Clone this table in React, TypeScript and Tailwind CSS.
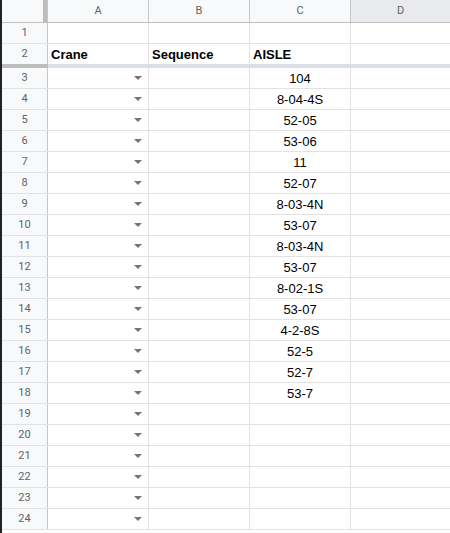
import React from "react";

const data: string[] = [
  "104", "8-04-4S", "52-05", "53-06", "11", "52-07", "8-03-4N", "53-07",
  "8-03-4N", "53-07", "8-02-1S", "53-07", "4-2-8S", "52-5", "52-7", "53-7",
];

function Arrow() {
  return (
    <svg width="8" height="4" viewBox="0 0 8 4" className="block">
      <path d="M0 0 L8 0 L4 4 Z" fill="#757575" />
    </svg>
  );
}

function RowHeader({ n }: { n: number }) {
  return (
    <div className="w-[46px] shrink-0 h-full bg-[#f8f9fa] border-r border-[#c7c7c7] flex items-center justify-center text-[11px] font-normal text-[#5f6368] font-['Roboto',sans-serif]">
      {n}
    </div>
  );
}

export default function App() {
  const rows = Array.from({ length: 22 }, (_, i) => i + 3);
  return (
    <div className="w-[450px] h-[533px] overflow-hidden bg-white flex font-['Liberation_Sans',Arial,sans-serif]">
      <div className="w-[2px] shrink-0 bg-[#202124]" />
      <div className="flex-1 flex flex-col min-w-0">
        {/* column headers */}
        <div className="h-[23px] flex shrink-0 border-b border-[#c0c0c0] font-['Roboto',sans-serif] text-[11px] text-[#5f6368]">
          <div className="w-[46px] shrink-0 flex border-r border-[#c7c7c7]">
            <div className="w-[41px] bg-[#f8f9fa]" />
            <div className="w-[4px] bg-[#bdbdbd]" />
          </div>
          <div className="w-[101px] shrink-0 bg-[#f8f9fa] border-r border-[#c7c7c7] flex items-center justify-center">A</div>
          <div className="w-[101px] shrink-0 bg-[#f8f9fa] border-r border-[#c7c7c7] flex items-center justify-center">B</div>
          <div className="w-[101px] shrink-0 bg-[#f8f9fa] border-r border-[#c7c7c7] flex items-center justify-center">C</div>
          <div className="flex-1 bg-[#e8eaed] flex items-center justify-center">D</div>
        </div>
        {/* row 1 */}
        <div className="h-[21px] flex shrink-0 border-b border-[#e2e2e2]">
          <RowHeader n={1} />
          <div className="w-[101px] shrink-0 border-r border-[#e2e2e2]" />
          <div className="w-[101px] shrink-0 border-r border-[#e2e2e2]" />
          <div className="w-[101px] shrink-0 border-r border-[#e2e2e2]" />
          <div className="flex-1" />
        </div>
        {/* row 2 */}
        <div className="h-[20px] flex shrink-0 text-[13px] text-black">
          <RowHeader n={2} />
          <div className="w-[101px] shrink-0 border-r border-[#e2e2e2] flex items-center pl-[3px] pt-[1px] font-bold">Crane</div>
          <div className="w-[101px] shrink-0 border-r border-[#e2e2e2] flex items-center pl-[3px] pt-[1px] font-bold">Sequence</div>
          <div className="w-[101px] shrink-0 border-r border-[#e2e2e2] flex items-center pl-[3px] pt-[1px] font-bold">AISLE</div>
          <div className="flex-1" />
        </div>
        {/* frozen divider */}
        <div className="h-[4px] flex shrink-0">
          <div className="w-[46px] shrink-0 bg-[#bdbdbd]" />
          <div className="flex-1 bg-[#dadfe5]" />
        </div>
        {rows.map((n) => {
          const val = data[n - 3];
          return (
            <div key={n} className="h-[21px] flex shrink-0 border-b border-[#e2e2e2] text-[13px] text-black">
              <RowHeader n={n} />
              <div className="w-[101px] shrink-0 border-r border-[#e2e2e2] flex items-center justify-end pr-[6px]">
                <Arrow />
              </div>
              <div className="w-[101px] shrink-0 border-r border-[#e2e2e2]" />
              <div className="w-[101px] shrink-0 border-r border-[#e2e2e2] flex items-center justify-center pt-[1px]">
                {val ?? ""}
              </div>
              <div className="flex-1" />
            </div>
          );
        })}
      </div>
    </div>
  );
}
